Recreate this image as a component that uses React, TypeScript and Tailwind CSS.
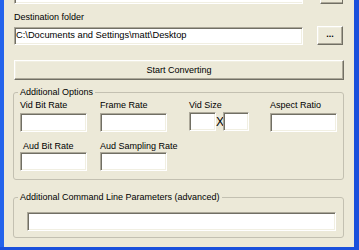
import React from 'react';

const sunken =
  'bg-white border border-t-[#aca899] border-l-[#aca899] border-b-white border-r-white shadow-[inset_1px_1px_0_#716f64,inset_-1px_-1px_0_#f1efe2]';
const raised =
  'bg-[#ece9d8] border border-t-white border-l-white border-b-[#716f64] border-r-[#716f64] shadow-[inset_-1px_-1px_0_#aca899,inset_1px_1px_0_#f1efe2]';

function Field({ label }: { label: string }) {
  return (
    <div className="flex flex-col">
      <div className="h-[11px] leading-[11px] whitespace-nowrap">{label}</div>
      <div className={`mt-[2px] w-[67px] h-[19px] ${sunken}`} />
    </div>
  );
}

export default function App() {
  return (
    <div className="w-[359px] h-[250px] flex flex-col bg-[#1a50dc] font-['Liberation_Sans'] text-[9px] text-black">
      <div className="flex flex-1 min-h-0">
        {/* window frame, left */}
        <div className="w-[4px] shrink-0 bg-[#2463eb]" />

        <div className="w-[350px] shrink-0 overflow-hidden bg-[#ece9d8] pl-[10px] flex flex-col">
          {/* leftover bottom of the source row */}
          <div className="flex h-[4px] shrink-0">
            <div className="w-[289px] h-[4px] bg-white border-l border-l-[#aca899] border-r border-r-white border-b border-b-white shadow-[inset_1px_0_0_#716f64,inset_0_-1px_0_#f1efe2]" />
            <div className="ml-[17px] w-[23px] h-[4px] bg-[#ece9d8] border-l border-l-white border-r border-r-[#716f64] border-b border-b-[#716f64] shadow-[inset_0_-1px_0_#aca899]" />
          </div>

          <div className="mt-[8px] h-[11px] leading-[11px] shrink-0">Destination folder</div>

          <div className="mt-[3px] flex items-center h-[19px] shrink-0">
            <div className={`w-[289px] h-[18px] flex items-center pl-[1px] text-[9.3px] whitespace-nowrap overflow-hidden ${sunken}`}>
              C:\Documents and Settings\matt\Desktop
            </div>
            <button className={`ml-[14px] w-[26px] h-[19px] flex items-center justify-center text-[9px] font-bold leading-none pb-[2px] ${raised}`}>
              ...
            </button>
          </div>

          <button className={`mt-[15px] w-[330px] h-[20px] shrink-0 flex items-center justify-center leading-[11px] ${raised}`}>
            Start Converting
          </button>

          <fieldset className="mt-[7px] -ml-px w-[331px] shrink-0 border border-[#c3c0b1] rounded-[3px] pl-[4px] pb-[8px]">
            <legend className="px-[2px] h-[11px] leading-[11px]">Additional Options</legend>
            <div className="pl-[2px] pt-[2px] flex flex-col">
              <div className="flex">
                <div className="w-[80px]">
                  <Field label="Vid Bit Rate" />
                </div>
                <div className="w-[89px]">
                  <Field label="Frame Rate" />
                </div>
                <div className="w-[80px] flex flex-col">
                  <div className="h-[11px] leading-[11px]">Vid Size</div>
                  <div className="mt-[1px] flex items-center">
                    <div className={`w-[27px] h-[19px] ${sunken}`} />
                    <span className="w-[7px] text-center text-[12px] leading-none">X</span>
                    <div className={`w-[26px] h-[19px] ${sunken}`} />
                  </div>
                </div>
                <div className="pl-[1px]">
                  <Field label="Aspect Ratio" />
                </div>
              </div>
              <div className="mt-[9px] flex">
                <div className="w-[80px] flex flex-col">
                  <div className="h-[11px] leading-[11px] pl-[3px]">Aud Bit Rate</div>
                  <div className={`w-[67px] h-[19px] ${sunken}`} />
                </div>
                <div className="w-[89px] flex flex-col">
                  <div className="h-[11px] leading-[11px]">Aud Sampling Rate</div>
                  <div className={`w-[67px] h-[19px] ${sunken}`} />
                </div>
              </div>
            </div>
          </fieldset>

          <fieldset className="mt-[12px] -ml-px w-[331px] shrink-0 border border-[#c3c0b1] rounded-[3px] pl-[4px] pb-[6px]">
            <legend className="px-[2px] h-[11px] leading-[11px] whitespace-nowrap">
              Additional Command Line Parameters (advanced)
            </legend>
            <div className={`mt-[9px] ml-[9px] w-[309px] h-[19px] ${sunken}`} />
          </fieldset>
        </div>

        {/* window frame, right */}
        <div className="w-[5px] shrink-0 bg-[#1a50dc]" />
      </div>
      {/* window frame, bottom */}
      <div className="h-[3px] shrink-0 bg-[#1a50dc]" />
    </div>
  );
}
